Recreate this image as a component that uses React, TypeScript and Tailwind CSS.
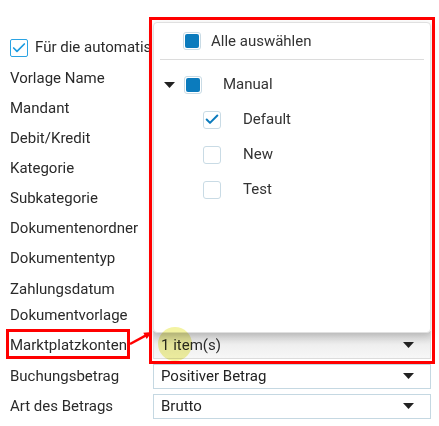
import { Check } from 'lucide-react';

const labels: { text: string; h: string }[] = [
  { text: 'Vorlage Name', h: 'h-[30px]' },
  { text: 'Mandant', h: 'h-[30px]' },
  { text: 'Debit/Kredit', h: 'h-[30px]' },
  { text: 'Kategorie', h: 'h-[30px]' },
  { text: 'Subkategorie', h: 'h-[30px]' },
  { text: 'Dokumentenordner', h: 'h-[30px]' },
  { text: 'Dokumententyp', h: 'h-[30px]' },
  { text: 'Zahlungsdatum', h: 'h-[32px]' },
  { text: 'Dokumentvorlage', h: 'h-[20px]' },
];

function Caret() {
  return (
    <svg width="11" height="6" viewBox="0 0 11 6" className="shrink-0">
      <polygon points="0,0 11,0 5.5,6" fill="#222" />
    </svg>
  );
}

function Box({ state }: { state: 'filled' | 'checked' | 'empty' }) {
  return (
    <span className="w-[18px] h-[18px] rounded-[3px] border border-[#c9dbe5] bg-white flex items-center justify-center shrink-0">
      {state === 'filled' && <span className="w-[14px] h-[14px] rounded-[2px] bg-[#0b7bbd]" />}
      {state === 'checked' && <Check className="w-[17px] h-[17px] text-[#0b7bbd]" strokeWidth={3} />}
    </span>
  );
}

function Select({ value, h, active }: { value: string; h: string; active?: boolean }) {
  return (
    <div
      className={`${h} w-[278px] border flex items-center justify-between pl-[7px] pr-[16px] text-[15px] ${
        active ? 'border-[#dcdcdc] bg-gradient-to-b from-[#d4d4d4] via-[#efefef] to-[#f7f7f7] text-[#2a2a2a]' : 'border-[#c5d8e2] bg-white text-[#222]'
      }`}
    >
      <span>{value}</span>
      <Caret />
    </div>
  );
}

export default function App() {
  return (
    <div className="relative w-[439px] h-[426px] bg-white overflow-hidden font-['Roboto',sans-serif] text-[15px] text-[#2a2a2a]">
      <div className="pt-[32px] flex flex-col">
        <div className="h-[31px] pl-[10px] flex items-center gap-[7px] whitespace-nowrap overflow-hidden w-[149px]">
          <span className="w-[18px] h-[18px] border border-[#2ba3e3] rounded-[2px] flex items-center justify-center shrink-0">
            <Check className="w-[18px] h-[18px] text-[#1b9be0]" strokeWidth={2.5} />
          </span>
          <span>Für die automatischen Buchungen</span>
        </div>
        {labels.map((l) => (
          <div key={l.text} className={`${l.h} pl-[10px] flex items-center`}>
            {l.text}
          </div>
        ))}
        <div className="h-[4px]" />
        <div className="flex items-center h-[32px]">
          <div className="w-[153px] pl-[10px]">Marktplatzkonten</div>
          <Select value="1 item(s)" h="h-[28px]" active />
        </div>
        <div className="flex items-center h-[30px]">
          <div className="w-[153px] pl-[10px]">Buchungsbetrag</div>
          <Select value="Positiver Betrag" h="h-[25px]" />
        </div>
        <div className="flex items-center h-[30px]">
          <div className="w-[153px] pl-[10px]">Art des Betrags</div>
          <Select value="Brutto" h="h-[25px]" />
        </div>
      </div>

      {/* dropdown popup */}
      <div className="absolute left-[153px] top-[22px] w-[278px] h-[311px] bg-white border border-[#e0e0e0] rounded-[4px] shadow-[0_3px_8px_rgba(0,0,0,0.15)] text-[#333]">
        <div className="flex items-center h-[36px] pl-[29px] gap-[10px]">
          <Box state="filled" />
          <span>Alle auswählen</span>
        </div>
        <div className="mx-[6px] border-t border-[#dcdcdc]" />
        <div className="flex items-center h-[42px] pt-[7px] pl-[10px]">
          <Caret />
          <span className="ml-[9px]">
            <Box state="filled" />
          </span>
          <span className="ml-[21px]">Manual</span>
        </div>
        {(['Default', 'New', 'Test'] as const).map((t, i) => (
          <div key={t} className="flex items-center h-[35px] pl-[49px] gap-[22px]">
            <Box state={i === 0 ? 'checked' : 'empty'} />
            <span>{t}</span>
          </div>
        ))}
      </div>

      {/* highlight */}
      <div className="absolute left-[158px] top-[327px] w-[34px] h-[34px] rounded-full bg-[#f0f08c] mix-blend-multiply opacity-80" />

      {/* annotations */}
      <div className="absolute left-[149px] top-[17px] w-[286px] h-[347px] border-[3px] border-[#ff0000]" />
      <div className="absolute left-[6px] top-[329px] w-[124px] h-[30px] border-[3px] border-[#ff0000]" />
      <svg className="absolute left-[128px] top-[328px]" width="28" height="20" viewBox="0 0 28 20">
        <line x1="2" y1="16" x2="18" y2="7.3" stroke="#ff0000" strokeWidth="2.5" />
        <polygon points="24,4 18.7,10.9 15.3,4.7" fill="#ff0000" />
      </svg>
    </div>
  );
}
